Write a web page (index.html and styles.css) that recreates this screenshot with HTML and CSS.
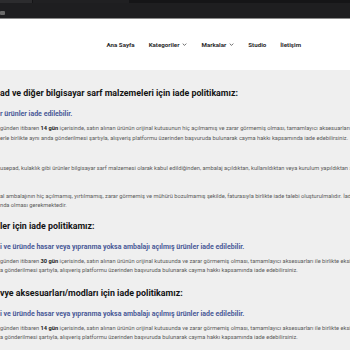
FILE: index.html
```html
<!DOCTYPE html>
<html lang="tr">

<head>
  <meta charset="UTF-8">
  <meta name="viewport" content="width=device-width, initial-scale=1.0">
  <title>İade Politikası</title>
  <link rel="stylesheet" href="styles.css">
</head>

<body>
  <div class="chrome">
    <div class="tabs">
      <span class="tab"></span>
      <span class="tab tab-wide"></span>
    </div>
    <div class="toolbar">
      <span class="tool-btn"></span>
    </div>
  </div>

  <header class="site-header">
    <nav class="menu">
      <a href="#">Ana Sayfa</a>
      <a href="#">Kategoriler <svg class="caret" viewBox="0 0 8 5"><path d="M1 1l3 3 3-3" /></svg></a>
      <a href="#">Markalar <svg class="caret" viewBox="0 0 8 5"><path d="M1 1l3 3 3-3" /></svg></a>
      <a href="#">Studio</a>
      <a href="#">İletişim</a>
    </nav>
  </header>

  <main class="policy">
    <section class="block">
      <h2>ad ve diğer bilgisayar sarf malzemeleri için iade politikamız:</h2>
      <h3>r ürünler iade edilebilir.</h3>
      <p class="text">günden itibaren <b>14 gün</b> içerisinde, satın alınan ürünün orijinal kutusunun hiç açılmamış ve zarar görmemiş olması, tamamlayıcı aksesuarları ile<br>erle birlikte aynı anda gönderilmesi şartıyla, alışveriş platformu üzerinden başvuruda bulunarak cayma hakkı kapsamında iade edebilirsiniz.</p>
      <p class="text note">usepad, kulaklık gibi ürünler bilgisayar sarf malzemesi olarak kabul edildiğinden, ambalaj açıldıktan, kullanıldıktan veya kurulum yapıldıktan sonra iade alınmamaktadır.</p>
      <p class="text">al ambalajının hiç açılmamış, yırtılmamış, zarar görmemiş ve mühürü bozulmamış şekilde, faturasıyla birlikte iade talebi oluşturulmalıdır. İade sürecinde<br>nda olması gerekmektedir.</p>
    </section>

    <section class="block">
      <h2>ler için iade politikamız:</h2>
      <h3>i ve üründe hasar veya yıpranma yoksa ambalajı açılmış ürünler iade edilebilir.</h3>
      <p class="text">günden itibaren <b>30 gün</b> içerisinde, satın alınan ürünün orijinal kutusunda ve zarar görmemiş olması, tamamlayıcı aksesuarları ile birlikte eksiksiz<br>a gönderilmesi şartıyla, alışveriş platformu üzerinden başvuruda bulunarak cayma hakkı kapsamında iade edebilirsiniz.</p>
    </section>

    <section class="block">
      <h2>vye aksesuarları/modları için iade politikamız:</h2>
      <h3>i ve üründe hasar veya yıpranma yoksa ambalajı açılmış ürünler iade edilebilir.</h3>
      <p class="text">günden itibaren <b>14 gün</b> içerisinde, satın alınan ürünün orijinal kutusunda ve zarar görmemiş olması, tamamlayıcı aksesuarları ile birlikte eksiksiz<br>a gönderilmesi şartıyla, alışveriş platformu üzerinden başvuruda bulunarak cayma hakkı kapsamında iade edebilirsiniz.</p>
    </section>
  </main>
</body>

</html>
```

FILE: styles.css
```css
* {
  box-sizing: border-box;
}

html,
body {
  margin: 0;
  height: 100%;
  overflow: hidden;
}

body {
  background: #efefef;
  font-family: Roboto, "Liberation Sans", sans-serif;
}

.chrome {
  background: #1e1e20;
  height: 19px;
  border-bottom: 1px solid #8a8a8a;
}

.tabs {
  display: flex;
  height: 3px;
  background: #151517;
}

.tab {
  width: 32px;
  background: #2c2c2e;
}

.tab-wide {
  width: 96px;
  margin-left: 1px;
  background: #202022;
}

.toolbar {
  display: flex;
  align-items: center;
  height: 15px;
}

.tool-btn {
  width: 5px;
  height: 4px;
  background: #6a6a6a;
  border-radius: 1px;
  margin-top: 4px;
}

.site-header {
  background: #fff;
  height: 51px;
  display: flex;
  align-items: center;
  justify-content: flex-end;
  padding: 0 49px 0 0;
}

.menu {
  display: flex;
  gap: 14px;
}

.menu a {
  color: #2b2b2b;
  text-decoration: none;
  font-size: 6.2px;
  font-weight: 700;
  display: flex;
  align-items: center;
  gap: 3px;
}

.caret {
  width: 5px;
  height: 3px;
  fill: none;
  stroke: #444;
  stroke-width: 1.3;
}

.policy {
  padding-top: 17px;
  white-space: nowrap;
}

.block + .block {
  margin-top: 9px;
}

.block + .block + .block {
  margin-top: 11px;
}

.block h2 {
  margin: 0 0 10px;
  font-size: 8.85px;
  line-height: 12px;
  font-weight: 700;
  color: #141414;
}

.block h3 {
  margin: 0 0 5px;
  font-size: 7px;
  line-height: 10px;
  font-weight: 700;
  color: #4a5a98;
}

.text {
  margin: 0;
  font-size: 5.7px;
  line-height: 9.5px;
  color: #5a5a5a;
}

.text b {
  color: #222;
}

.text.note {
  margin: 21px 0 18px;
}
```
